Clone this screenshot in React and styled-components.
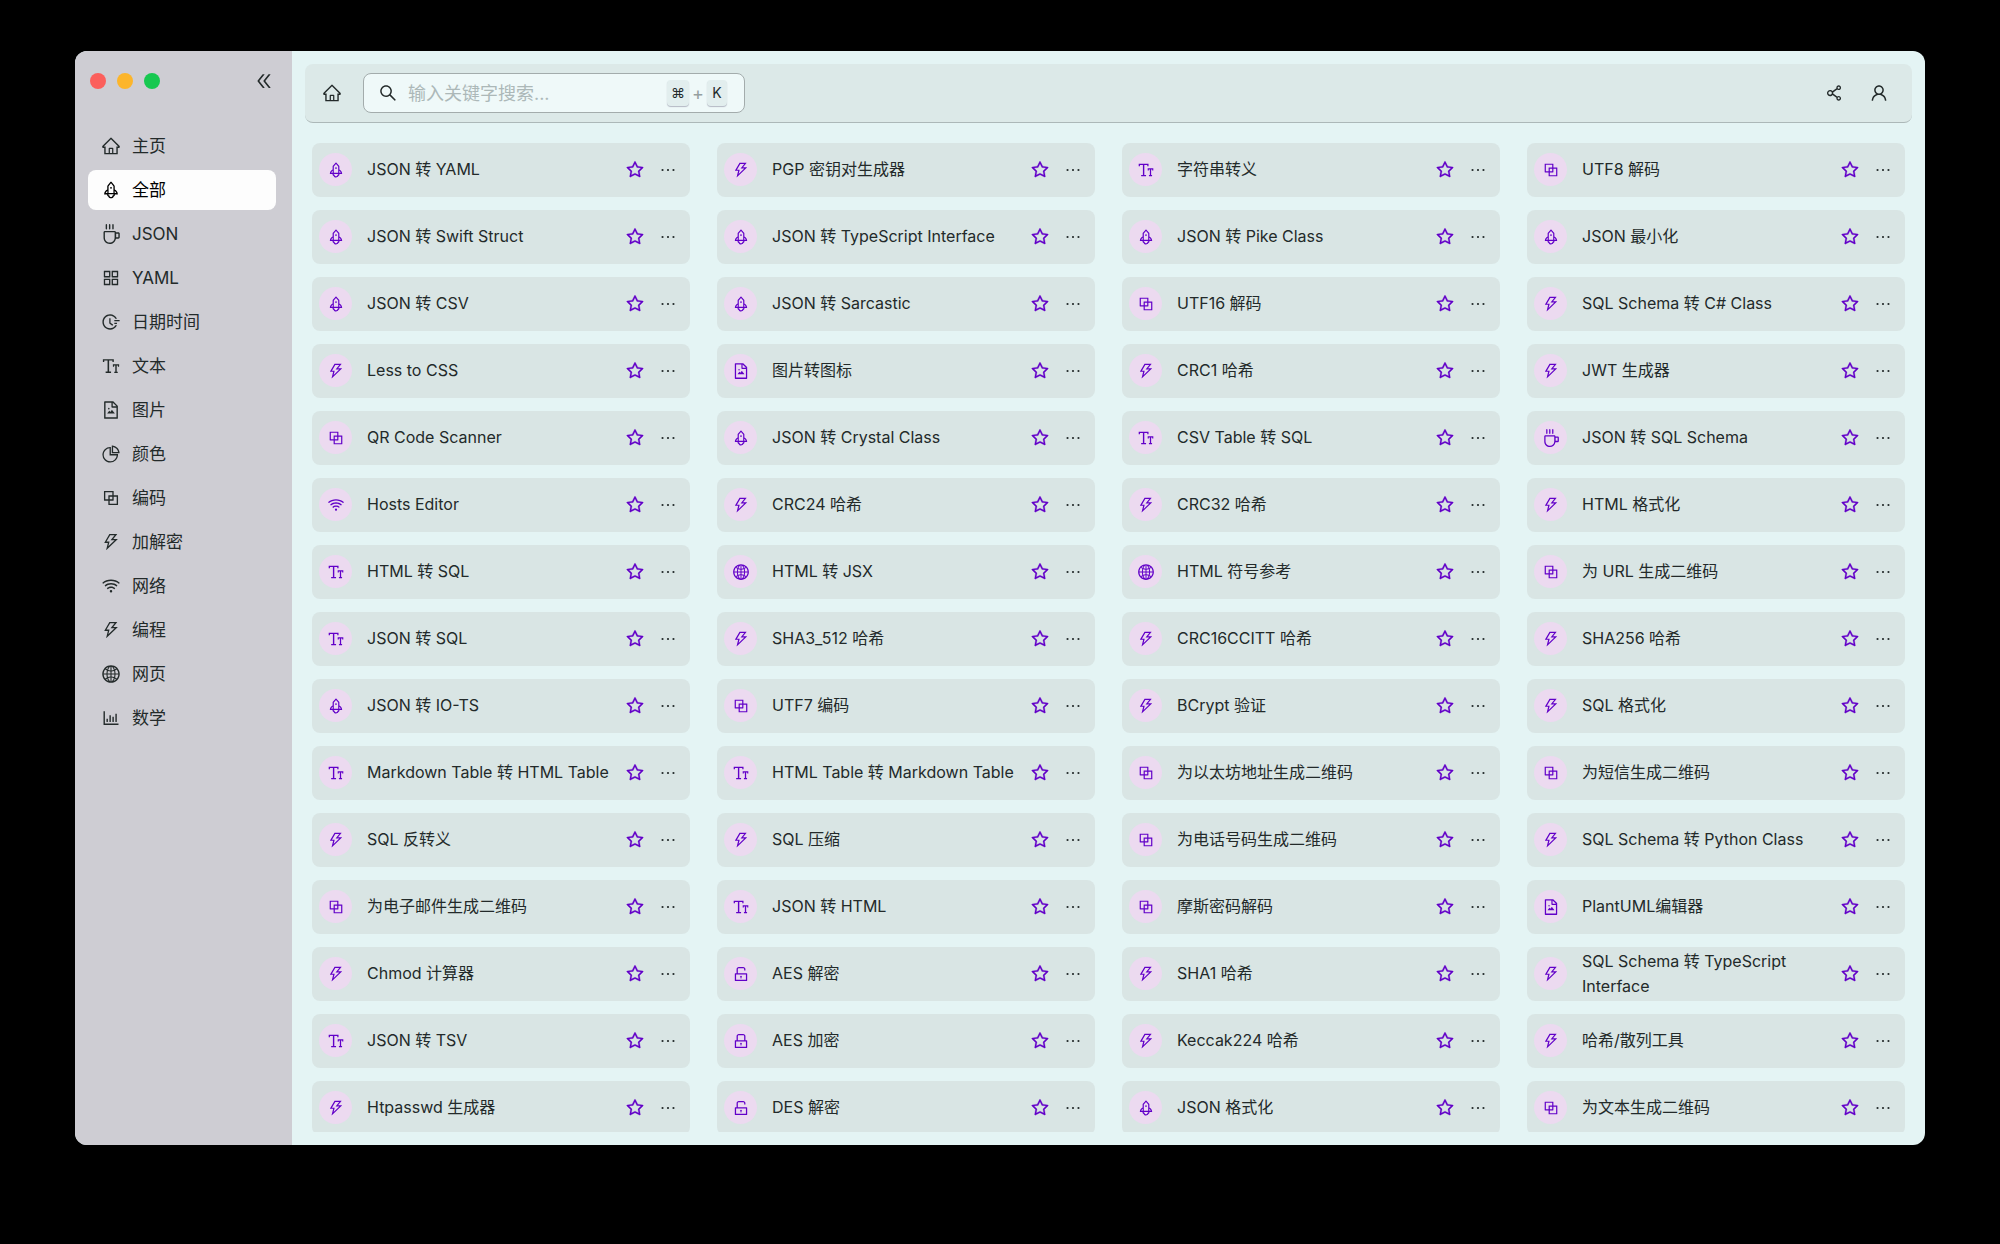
import { useState } from "react";
import styled, { createGlobalStyle } from "styled-components";
import {
  AiOutlineHome,
  AiOutlineRocket,
  AiOutlineCoffee,
  AiOutlineAppstore,
  AiOutlineFieldTime,
  AiOutlineFontSize,
  AiOutlineFileImage,
  AiOutlinePieChart,
  AiOutlineBlock,
  AiOutlineThunderbolt,
  AiOutlineWifi,
  AiOutlineGlobal,
  AiOutlineBarChart,
  AiOutlineLock,
  AiOutlineUnlock,
  AiOutlineStar,
  AiOutlineEllipsis,
  AiOutlineSearch,
  AiOutlineShareAlt,
  AiOutlineUser,
  AiOutlineDoubleLeft,
} from "react-icons/ai";

const icons = {
  home: AiOutlineHome,
  rocket: AiOutlineRocket,
  coffee: AiOutlineCoffee,
  app: AiOutlineAppstore,
  time: AiOutlineFieldTime,
  text: AiOutlineFontSize,
  image: AiOutlineFileImage,
  pie: AiOutlinePieChart,
  block: AiOutlineBlock,
  bolt: AiOutlineThunderbolt,
  wifi: AiOutlineWifi,
  globe: AiOutlineGlobal,
  chart: AiOutlineBarChart,
  lock: AiOutlineLock,
  unlock: AiOutlineUnlock,
};

const menu = [
  ["home", "主页"],
  ["rocket", "全部"],
  ["coffee", "JSON"],
  ["app", "YAML"],
  ["time", "日期时间"],
  ["text", "文本"],
  ["image", "图片"],
  ["pie", "颜色"],
  ["block", "编码"],
  ["bolt", "加解密"],
  ["wifi", "网络"],
  ["bolt", "编程"],
  ["globe", "网页"],
  ["chart", "数学"],
];

const tools = [
  ["rocket", "JSON 转 YAML"],
  ["bolt", "PGP 密钥对生成器"],
  ["text", "字符串转义"],
  ["block", "UTF8 解码"],
  ["rocket", "JSON 转 Swift Struct"],
  ["rocket", "JSON 转 TypeScript Interface"],
  ["rocket", "JSON 转 Pike Class"],
  ["rocket", "JSON 最小化"],
  ["rocket", "JSON 转 CSV"],
  ["rocket", "JSON 转 Sarcastic"],
  ["block", "UTF16 解码"],
  ["bolt", "SQL Schema 转 C# Class"],
  ["bolt", "Less to CSS"],
  ["image", "图片转图标"],
  ["bolt", "CRC1 哈希"],
  ["bolt", "JWT 生成器"],
  ["block", "QR Code Scanner"],
  ["rocket", "JSON 转 Crystal Class"],
  ["text", "CSV Table 转 SQL"],
  ["coffee", "JSON 转 SQL Schema"],
  ["wifi", "Hosts Editor"],
  ["bolt", "CRC24 哈希"],
  ["bolt", "CRC32 哈希"],
  ["bolt", "HTML 格式化"],
  ["text", "HTML 转 SQL"],
  ["globe", "HTML 转 JSX"],
  ["globe", "HTML 符号参考"],
  ["block", "为 URL 生成二维码"],
  ["text", "JSON 转 SQL"],
  ["bolt", "SHA3_512 哈希"],
  ["bolt", "CRC16CCITT 哈希"],
  ["bolt", "SHA256 哈希"],
  ["rocket", "JSON 转 IO-TS"],
  ["block", "UTF7 编码"],
  ["bolt", "BCrypt 验证"],
  ["bolt", "SQL 格式化"],
  ["text", "Markdown Table 转 HTML Table"],
  ["text", "HTML Table 转 Markdown Table"],
  ["block", "为以太坊地址生成二维码"],
  ["block", "为短信生成二维码"],
  ["bolt", "SQL 反转义"],
  ["bolt", "SQL 压缩"],
  ["block", "为电话号码生成二维码"],
  ["bolt", "SQL Schema 转 Python Class"],
  ["block", "为电子邮件生成二维码"],
  ["text", "JSON 转 HTML"],
  ["block", "摩斯密码解码"],
  ["image", "PlantUML编辑器"],
  ["bolt", "Chmod 计算器"],
  ["unlock", "AES 解密"],
  ["bolt", "SHA1 哈希"],
  ["bolt", "SQL Schema 转 TypeScript Interface"],
  ["text", "JSON 转 TSV"],
  ["lock", "AES 加密"],
  ["bolt", "Keccak224 哈希"],
  ["bolt", "哈希/散列工具"],
  ["bolt", "Htpasswd 生成器"],
  ["unlock", "DES 解密"],
  ["rocket", "JSON 格式化"],
  ["block", "为文本生成二维码"],
];

const App = () => {
  const [active, setActive] = useState("全部");
  const [query, setQuery] = useState("");
  return (
    <Desktop>
      <GlobalStyle />
      <Window>
        <Sidebar>
          <TitleBar>
            <Lights>
              <Light color="#fb5f5c" />
              <Light color="#fcb52b" />
              <Light color="#17c850" />
            </Lights>
            <IconButton aria-label="收起">
              <AiOutlineDoubleLeft />
            </IconButton>
          </TitleBar>
          <Menu>
            {menu.map(([icon, label]) => {
              const Icon = icons[icon];
              return (
                <MenuItem
                  key={label}
                  $active={label === active}
                  onClick={() => setActive(label)}
                >
                  <Icon size={20} />
                  {label}
                </MenuItem>
              );
            })}
          </Menu>
        </Sidebar>
        <Main>
          <Toolbar>
            <IconButton aria-label="主页">
              <AiOutlineHome />
            </IconButton>
            <SearchBox>
              <AiOutlineSearch size={20} />
              <SearchInput
                aria-label="搜索"
                placeholder="输入关键字搜索..."
                value={query}
                onChange={(e) => setQuery(e.target.value)}
              />
              <Keys>
                <Key>⌘</Key>+<Key>K</Key>
              </Keys>
            </SearchBox>
            <Actions>
              <IconButton aria-label="分享">
                <AiOutlineShareAlt />
              </IconButton>
              <IconButton aria-label="用户">
                <AiOutlineUser />
              </IconButton>
            </Actions>
          </Toolbar>
          <Grid>
            {tools.map(([icon, name]) => {
              const Icon = icons[icon];
              return (
                <Card key={name}>
                  <Badge>
                    <Icon size={18} />
                  </Badge>
                  <Name href="#">{name}</Name>
                  <StarButton aria-label="收藏">
                    <AiOutlineStar />
                  </StarButton>
                  <IconButton aria-label="更多">
                    <AiOutlineEllipsis />
                  </IconButton>
                </Card>
              );
            })}
          </Grid>
        </Main>
      </Window>
    </Desktop>
  );
};

export default App;

const GlobalStyle = createGlobalStyle`
  * {
    box-sizing: border-box;
  }
  body {
    margin: 0;
    background: #000;
    color: #232a2a;
    font-family: Inter, "Noto Sans CJK SC", sans-serif;
    font-size: 16px;
  }
  button, input, kbd {
    font-family: inherit;
    color: inherit;
  }
`;

const Desktop = styled.div`
  height: 100vh;
  padding: 51px 75px 99px;
`;

const Window = styled.div`
  display: flex;
  height: 100%;
  border-radius: 12px;
  overflow: hidden;
  background: #e4f4f4;
`;

const Sidebar = styled.aside`
  display: flex;
  flex-direction: column;
  flex: 0 0 217px;
  padding: 15px 16px 0 13px;
  background: #cecdd3;
`;

const TitleBar = styled.div`
  display: flex;
  justify-content: space-between;
  align-items: center;
  height: 30px;
  margin-bottom: 30px;
  padding: 0 2px;
`;

const Lights = styled.div`
  display: flex;
  gap: 11px;
`;

const Light = styled.span`
  width: 16px;
  height: 16px;
  border-radius: 50%;
  background: ${({ color }) => color};
`;

const IconButton = styled.button`
  display: flex;
  align-items: center;
  justify-content: center;
  flex: none;
  padding: 0;
  border: none;
  background: none;
  font-size: 20px;
  cursor: pointer;
`;

const Menu = styled.nav`
  display: flex;
  flex-direction: column;
  gap: 4px;
`;

const MenuItem = styled.button`
  display: flex;
  align-items: center;
  gap: 11px;
  height: 40px;
  padding: 0 13px;
  border: none;
  border-radius: 8px;
  background: ${({ $active }) => ($active ? "#fdfdfd" : "transparent")};
  color: ${({ $active }) => ($active ? "#000" : "#232a2a")};
  font-size: 17px;
  line-height: 24px;
  cursor: pointer;
`;

const Main = styled.main`
  display: flex;
  flex-direction: column;
  flex: 1;
  min-width: 0;
  padding: 13px;
`;

const Toolbar = styled.header`
  display: flex;
  align-items: center;
  flex: none;
  height: 59px;
  padding: 0 23px 0 17px;
  border-bottom: 1px solid #acb8b8;
  border-radius: 8px;
  background: #dce9e8;
`;

const SearchBox = styled.label`
  display: flex;
  align-items: center;
  gap: 10px;
  width: 382px;
  height: 40px;
  margin-left: 21px;
  padding: 0 17px 0 14px;
  border: 1px solid #a3acac;
  border-radius: 8px;
  background: #eff9f9;
`;

const SearchInput = styled.input`
  flex: 1;
  min-width: 0;
  padding: 0;
  border: none;
  outline: none;
  background: none;
  font-size: 18px;
  &::placeholder {
    color: #acb8b8;
  }
`;

const Keys = styled.span`
  display: flex;
  align-items: center;
  gap: 3px;
  color: #95a0a0;
  font-size: 18px;
`;

const Key = styled.kbd`
  min-width: 20px;
  height: 26px;
  padding: 0 4px;
  border-radius: 4px;
  background: #e2eeee;
  box-shadow: 0 1px 1px #b4b8c4;
  color: #232a2a;
  font-size: 14px;
  line-height: 26px;
  text-align: center;
`;

const Actions = styled.div`
  display: flex;
  gap: 25px;
  margin-left: auto;
`;

const Grid = styled.section`
  display: grid;
  grid-template-columns: repeat(4, 1fr);
  grid-auto-rows: 54px;
  gap: 13px 27px;
  flex: 1;
  min-height: 0;
  margin-top: 20px;
  padding: 0 7px;
  overflow: hidden;
`;

const Card = styled.article`
  display: flex;
  align-items: center;
  min-width: 0;
  padding: 0 12px 1px 7px;
  border-radius: 8px;
  background: #d9e5e4;
`;

const Badge = styled.span`
  display: flex;
  align-items: center;
  justify-content: center;
  flex: none;
  width: 33px;
  height: 33px;
  margin-right: 15px;
  border-radius: 50%;
  background: #ecdaf0;
  color: #6200c8;
`;

const Name = styled.a`
  flex: 1;
  min-width: 0;
  margin-right: 14px;
  color: inherit;
  line-height: 25px;
  text-decoration: none;
`;

const StarButton = styled(IconButton)`
  margin-right: 13px;
  color: #6200c8;
  svg {
    stroke-width: 14;
  }
`;
